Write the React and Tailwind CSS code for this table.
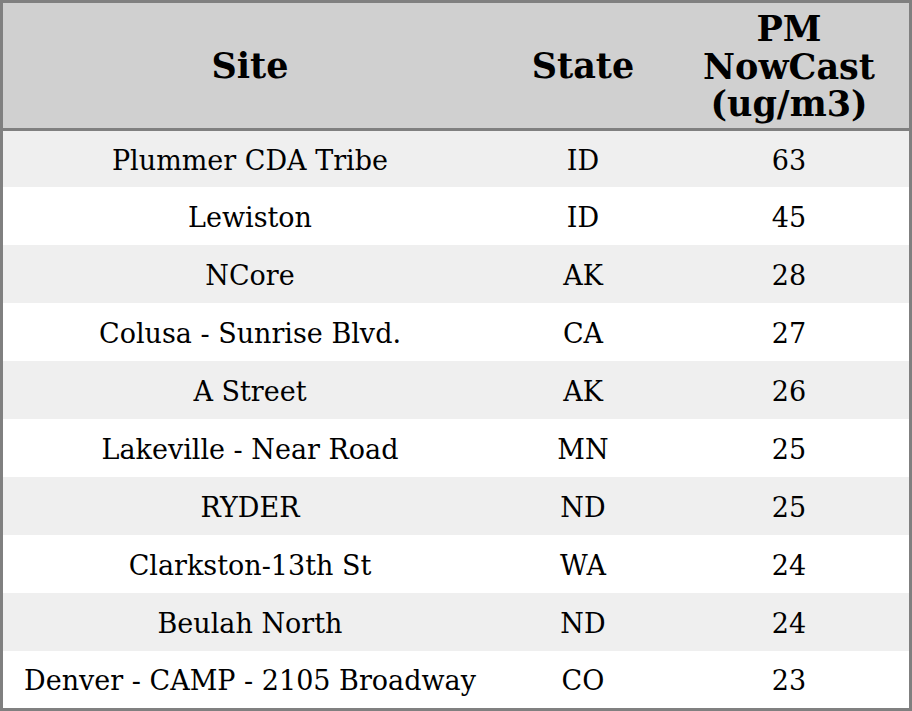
import React from "react";

const rows = [
  ["Plummer CDA Tribe", "ID", "63"],
  ["Lewiston", "ID", "45"],
  ["NCore", "AK", "28"],
  ["Colusa - Sunrise Blvd.", "CA", "27"],
  ["A Street", "AK", "26"],
  ["Lakeville - Near Road", "MN", "25"],
  ["RYDER", "ND", "25"],
  ["Clarkston-13th St", "WA", "24"],
  ["Beulah North", "ND", "24"],
  ["Denver - CAMP - 2105 Broadway", "CO", "23"],
];

const App = () => {
  return (
    <div
      className="w-[912px] h-[711px] bg-white text-black border-[3px] border-[#808080] flex flex-col"
      style={{ fontFamily: '"DejaVu Serif", serif' }}
    >
      {/* HEADER */}
      <div className="h-[128px] shrink-0 bg-[#d0d0d0] border-b-[3px] border-[#808080] grid grid-cols-[494px_172px_1fr] items-center text-center text-[35px] font-bold leading-[37.5px]">
        <div>Site</div>
        <div>State</div>
        <div className="pt-[2px]">
          PM
          <br />
          NowCast
          <br />
          (ug/m3)
        </div>
      </div>

      {/* BODY */}
      {rows.map((r, i) => {
        const h =
          i === 0 ? "h-[56px]" : i === rows.length - 1 ? "h-[56px]" : "h-[58px]";
        const bg = i % 2 === 0 ? "bg-[#efefef]" : "bg-white";
        return (
          <div
            key={i}
            className={`${bg} ${h} shrink-0 pt-1 grid grid-cols-[494px_172px_1fr] items-center text-center text-[27px]`}
          >
            <div>{r[0]}</div>
            <div>{r[1]}</div>
            <div>{r[2]}</div>
          </div>
        );
      })}
    </div>
  );
};

export default App;
